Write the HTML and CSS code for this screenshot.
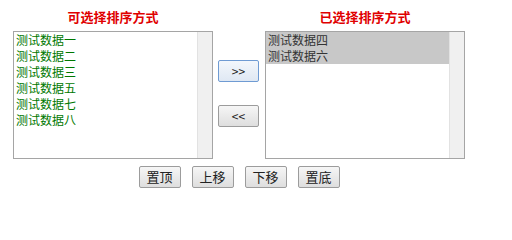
FILE: index.html
```html
<!DOCTYPE html>
<html>
<head>
<meta charset="utf-8">
<link rel="stylesheet" href="styles.css">
</head>
<body>
<div class="wrap">
  <div class="row">
    <div class="col">
      <div class="title">可选择排序方式</div>
      <div class="listbox">
        <div class="items green">
          <div class="item">测试数据一</div>
          <div class="item">测试数据二</div>
          <div class="item">测试数据三</div>
          <div class="item">测试数据五</div>
          <div class="item">测试数据七</div>
          <div class="item">测试数据八</div>
        </div>
        <div class="scroll"></div>
      </div>
    </div>
    <div class="mid">
      <button class="btn small focus">&gt;&gt;</button>
      <button class="btn small">&lt;&lt;</button>
    </div>
    <div class="col">
      <div class="title">已选择排序方式</div>
      <div class="listbox">
        <div class="items">
          <div class="item sel">测试数据四</div>
          <div class="item sel">测试数据六</div>
        </div>
        <div class="scroll"></div>
      </div>
    </div>
  </div>
  <div class="bottom">
    <button class="btn big">置顶</button>
    <button class="btn big">上移</button>
    <button class="btn big">下移</button>
    <button class="btn big">置底</button>
  </div>
</div>
</body>
</html>
```
FILE: styles.css
```css
html, body {
  margin: 0;
  padding: 0;
  background: #fff;
}
body {
  font-family: "Noto Sans CJK SC", "DejaVu Sans", sans-serif;
  font-size: 12px;
}
.wrap {
  padding: 8px 0 0 13px;
  width: 452px;
}
.row {
  display: flex;
}
.col {
  width: 200px;
  display: flex;
  flex-direction: column;
}
.title {
  height: 18px;
  line-height: 18px;
  margin-bottom: 5px;
  text-align: center;
  color: #e00000;
  font-weight: bold;
  font-size: 13px;
}
.listbox {
  box-sizing: border-box;
  width: 200px;
  height: 128px;
  border: 1px solid #a5a5a5;
  display: flex;
  background: #fff;
}
.items {
  flex: 1;
  padding-top: 0;
}
.item {
  height: 16px;
  line-height: 16px;
  padding-left: 2px;
  font-size: 12px;
  color: #333;
  white-space: nowrap;
}
.green .item {
  color: #007800;
}
.item.sel {
  background: #c8c8c8;
  color: #333;
}
.scroll {
  width: 14px;
  background: #f0f0f0;
  border-left: 1px solid #e2e2e2;
}
.mid {
  width: 52px;
  display: flex;
  flex-direction: column;
  align-items: flex-start;
  padding-top: 52px;
  padding-left: 5px;
  box-sizing: border-box;
}
.btn {
  box-sizing: border-box;
  height: 22px;
  border: 1px solid #9c9c9c;
  border-radius: 2px;
  background: linear-gradient(#f6f6f6, #dedede);
  color: #222;
  font-family: "Noto Sans CJK SC", "DejaVu Sans", sans-serif;
  padding: 0;
  margin: 0;
  line-height: 20px;
}
.btn.small {
  width: 41px;
  font-size: 12px;
  margin-bottom: 23px;
}
.btn.focus {
  border-color: #6f9bd3;
  background: linear-gradient(#f3f7fc, #dfe8f3);
}
.bottom {
  margin-top: 7px;
  display: flex;
  justify-content: center;
  gap: 11px;
}
.btn.big {
  width: 42px;
  font-size: 13px;
}
```
